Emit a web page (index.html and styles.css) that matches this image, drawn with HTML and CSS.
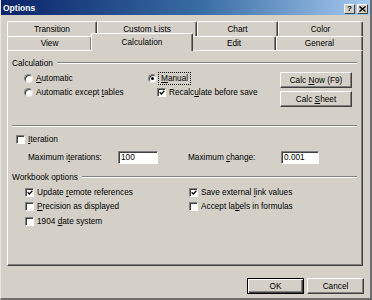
FILE: index.html
```html
<!DOCTYPE html>
<html>
<head>
<meta charset="utf-8">
<link rel="stylesheet" href="styles.css">
</head>
<body>
<div class="window">
  <div class="titlebar">
    <span class="title">Options</span>
    <div class="tb-btns">
      <span class="tb-btn">?</span>
      <span class="tb-btn close">
        <svg width="7" height="6" viewBox="0 0 7 6"><path d="M0.5 0.5 L6.5 5.5 M6.5 0.5 L0.5 5.5" stroke="#000" stroke-width="1.4" fill="none"/></svg>
      </span>
    </div>
  </div>

  <div class="tabs">
    <div class="tabrow row-back">
      <div class="tab">Transition</div>
      <div class="tab">Custom Lists</div>
      <div class="tab">Chart</div>
      <div class="tab">Color</div>
    </div>
    <div class="tabrow row-front">
      <div class="tab">View</div>
      <div class="tab selected">Calculation</div>
      <div class="tab">Edit</div>
      <div class="tab">General</div>
    </div>
  </div>

  <div class="panel">
    <div class="group-head"><span>Calculation</span><div class="rule"></div></div>

    <div class="calc-body">
      <div class="calc-options">
        <label class="opt"><span class="radio"></span><span><u>A</u>utomatic</span></label>
        <label class="opt"><span class="radio on"></span><span class="focus"><u>M</u>anual</span></label>
        <label class="opt"><span class="radio"></span><span>Automatic except <u>t</u>ables</span></label>
        <label class="opt sub"><span class="check on"><svg width="7" height="7" viewBox="0 0 7 7"><path d="M0.8 3.2 L2.7 5.2 L6.3 1.4" stroke="#000" stroke-width="1.5" fill="none"/></svg></span><span>Recalc<u>u</u>late before save</span></label>
      </div>
      <div class="calc-buttons">
        <div class="btn"><span>Calc <u>N</u>ow (F9)</span></div>
        <div class="btn"><span>Calc <u>S</u>heet</span></div>
      </div>
    </div>

    <div class="separator"></div>

    <label class="opt iter"><span class="check"></span><span><u>I</u>teration</span></label>
    <div class="iter-row">
      <span class="lbl-iter">Maximum i<u>t</u>erations:</span>
      <span class="field f-iter">100</span>
      <span class="lbl-change">Maximum <u>c</u>hange:</span>
      <span class="field f-change">0.001</span>
    </div>

    <div class="group-head wb-head"><span>Workbook options</span><div class="rule"></div></div>

    <div class="wb-options">
      <label class="opt"><span class="check on"><svg width="7" height="7" viewBox="0 0 7 7"><path d="M0.8 3.2 L2.7 5.2 L6.3 1.4" stroke="#000" stroke-width="1.5" fill="none"/></svg></span><span>Update <u>r</u>emote references</span></label>
      <label class="opt"><span class="check on"><svg width="7" height="7" viewBox="0 0 7 7"><path d="M0.8 3.2 L2.7 5.2 L6.3 1.4" stroke="#000" stroke-width="1.5" fill="none"/></svg></span><span>Save external <u>l</u>ink values</span></label>
      <label class="opt"><span class="check"></span><span><u>P</u>recision as displayed</span></label>
      <label class="opt"><span class="check"></span><span>Accept la<u>b</u>els in formulas</span></label>
      <label class="opt"><span class="check"></span><span>1904 <u>d</u>ate system</span></label>
    </div>
  </div>

  <div class="footer">
    <div class="btn default"><span>OK</span></div>
    <div class="btn"><span>Cancel</span></div>
  </div>
</div>
</body>
</html>
```

FILE: styles.css
```css
html, body {
  margin: 0;
  padding: 0;
}
body {
  width: 372px;
  height: 300px;
  background: #d4d0c8;
  font-family: "Liberation Sans", Arial, sans-serif;
  font-size: 8.25px;
  color: #000;
  overflow: hidden;
}
u {
  text-decoration: underline;
  text-underline-offset: 1px;
}
.window {
  box-sizing: border-box;
  width: 372px;
  height: 300px;
  border-left: 1px solid #e8e6e0;
  border-right: 2px solid #6e6e6e;
  border-bottom: 2px solid #6e6e6e;
  display: flex;
  flex-direction: column;
}

/* title bar */
.titlebar {
  height: 15px;
  background: linear-gradient(to right, #0a246a, #3a6ea5 55%, #a6caf0);
  display: flex;
  align-items: center;
  justify-content: space-between;
  padding: 0 2px 0 2px;
}
.title {
  color: #fff;
  font-weight: bold;
  font-size: 8.5px;
}
.tb-btns {
  display: flex;
  gap: 2px;
  margin-top: 3px;
}
.tb-btn {
  box-sizing: border-box;
  width: 11px;
  height: 10px;
  background: #d4d0c8;
  border: 1px solid;
  border-color: #fff #404040 #404040 #fff;
  display: flex;
  align-items: center;
  justify-content: center;
  font-weight: bold;
  font-size: 8px;
  line-height: 1;
}

/* tabs */
.tabs {
  margin-top: 6px;
  padding-left: 6px;
}
.tabrow {
  display: grid;
}
.row-back {
  grid-template-columns: 90px 100px 81px 85px;
  height: 15px;
}
.row-front {
  grid-template-columns: 85px 100px 84px 87px;
  height: 14px;
}
.tab {
  box-sizing: border-box;
  border-top: 1px solid #fff;
  border-left: 1px solid #fff;
  border-right: 1px solid #404040;
  box-shadow: inset -1px 0 #808080;
  border-radius: 2px 2px 0 0;
  display: flex;
  align-items: center;
  justify-content: center;
  background: #d4d0c8;
}
.tab.selected {
  position: relative;
  z-index: 1;
  margin: -3px -1px -1px -1px;
}

/* panel */
.panel {
  box-sizing: border-box;
  margin-left: 6px;
  width: 356px;
  height: 216px;
  border-top: 1px solid #fff;
  border-left: 1px solid #fff;
  border-right: 1px solid #404040;
  border-bottom: 1px solid #404040;
  box-shadow: inset -1px -1px #808080;
  display: flex;
  flex-direction: column;
}
.group-head {
  display: flex;
  align-items: center;
  height: 10px;
  margin-top: 7px;
  padding: 0 5px 0 4px;
}
.rule {
  flex: 1;
  margin-left: 4px;
  border-top: 1px solid #808080;
  border-bottom: 1px solid #fff;
}
.separator {
  margin: 18px 5px 0 4px;
  border-top: 1px solid #808080;
  border-bottom: 1px solid #fff;
}

.opt {
  display: flex;
  align-items: center;
  gap: 3px;
  height: 12px;
  white-space: nowrap;
}
.radio {
  box-sizing: border-box;
  width: 9px;
  height: 9px;
  border-radius: 50%;
  background: #fff;
  border: 1px solid;
  border-color: #808080 #e8e8e8 #e8e8e8 #808080;
  box-shadow: inset 1px 1px #404040;
  display: flex;
  align-items: center;
  justify-content: center;
  flex: none;
}
.radio.on::after {
  content: "";
  width: 3px;
  height: 3px;
  border-radius: 50%;
  background: #000;
}
.check {
  box-sizing: border-box;
  width: 9px;
  height: 9px;
  background: #fff;
  border: 1px solid;
  border-color: #808080 #fff #fff #808080;
  box-shadow: inset 1px 1px #404040;
  display: flex;
  align-items: center;
  justify-content: center;
  flex: none;
}
.check svg {
  margin: 1px 0 0 1px;
}
.focus {
  outline: 1px dotted #000;
  outline-offset: 1px;
  padding: 0 1px;
}

.calc-body {
  display: flex;
  margin-top: 4px;
  padding-left: 16px;
  padding-right: 10px;
}
.calc-options {
  display: grid;
  grid-template-columns: 124px auto;
  grid-auto-rows: 12px;
  row-gap: 2px;
  align-content: start;
}
.opt.sub {
  padding-left: 9px;
}
.calc-buttons {
  margin-left: auto;
  display: flex;
  flex-direction: column;
  gap: 3px;
}
.btn {
  box-sizing: border-box;
  height: 16px;
  background: #d4d0c8;
  border: 1px solid;
  border-color: #fff #404040 #404040 #fff;
  box-shadow: inset -1px -1px #808080;
  display: flex;
  align-items: center;
  justify-content: center;
  white-space: nowrap;
}
.calc-buttons .btn {
  width: 72px;
}

.iter {
  margin-top: 6px;
  padding-left: 8px;
}
.iter-row {
  display: flex;
  align-items: center;
  height: 14px;
  margin-top: 5px;
  padding-left: 20px;
}
.lbl-iter {
  width: 90px;
}
.lbl-change {
  width: 93px;
  margin-left: 30px;
}
.field {
  box-sizing: border-box;
  height: 13px;
  background: #fff;
  border: 1px solid;
  border-color: #808080 #fff #fff #808080;
  box-shadow: inset 1px 1px #404040;
  padding: 0 2px;
  display: flex;
  align-items: center;
}
.f-iter {
  width: 40px;
}
.f-change {
  width: 38px;
}

.wb-head {
  margin-top: 8px;
}
.wb-options {
  display: grid;
  grid-template-columns: 164px auto;
  grid-auto-rows: 12px;
  row-gap: 2.5px;
  margin-top: 4px;
  padding-left: 17px;
}

.footer {
  display: flex;
  justify-content: flex-end;
  gap: 3px;
  margin-top: 12px;
  padding-right: 6px;
}
.footer .btn {
  width: 57px;
}
.btn.default {
  border: 1px solid #000;
  box-shadow: inset 1px 1px #fff, inset -1px -1px #404040, inset -2px -2px #808080;
}
```
